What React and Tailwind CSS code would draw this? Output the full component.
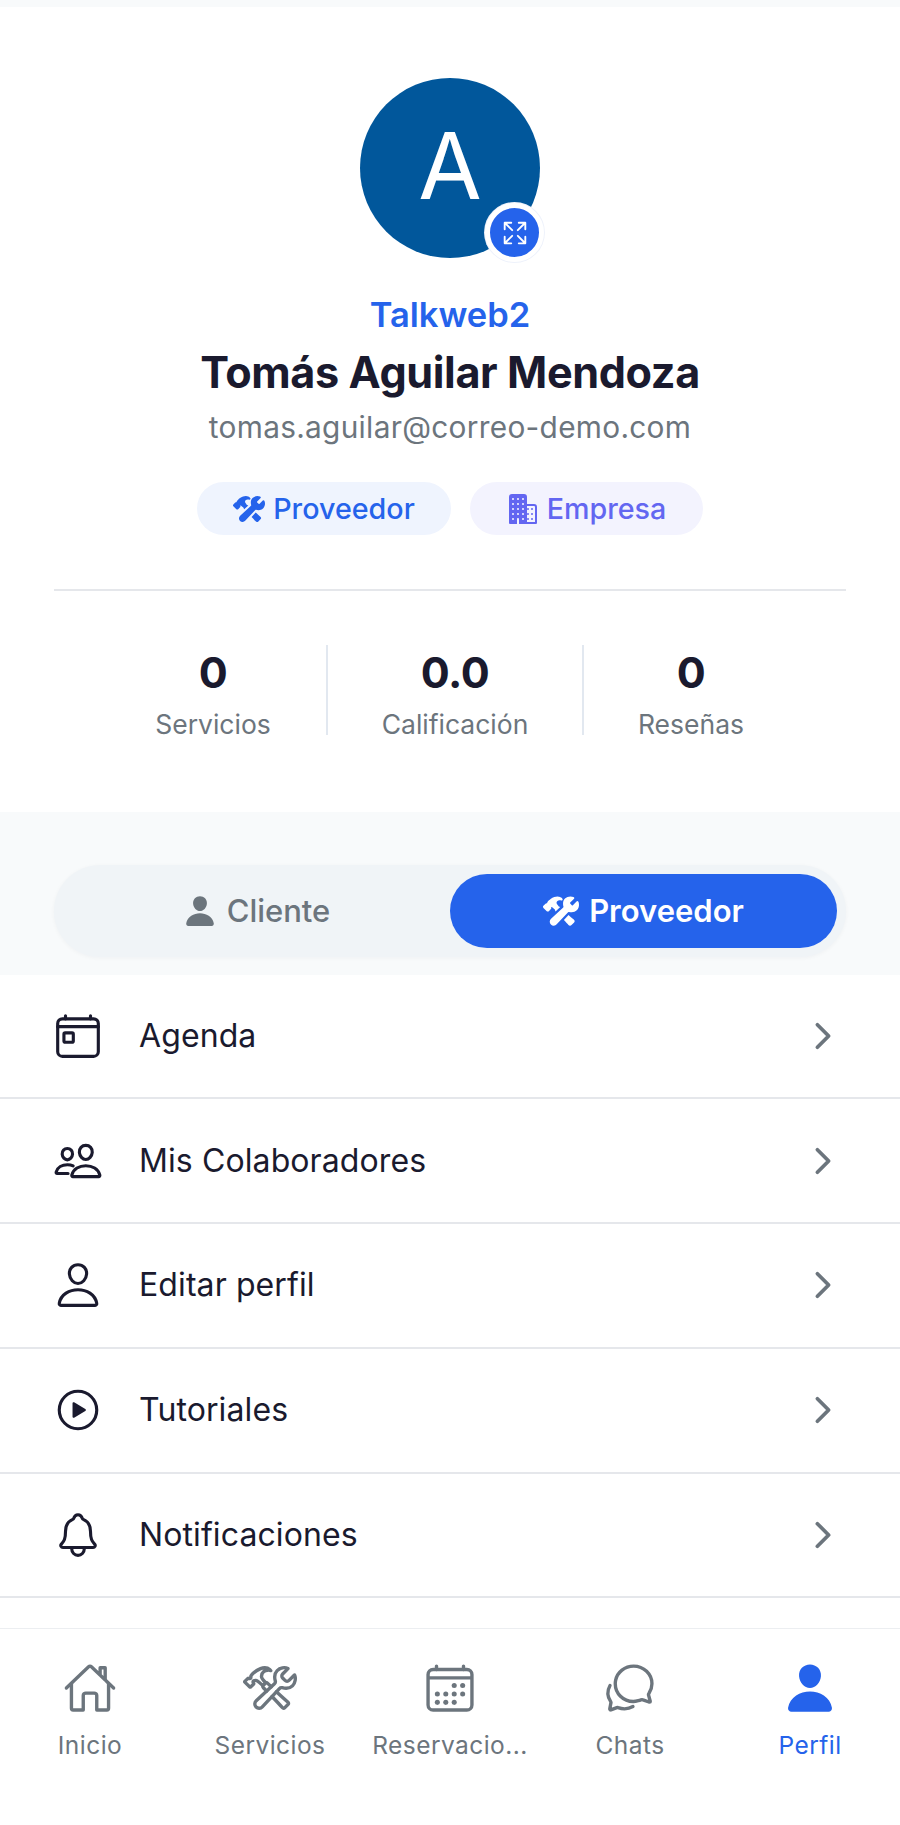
import React from "react";
import {
  IoBusiness,
  IoCalendarOutline,
  IoChatbubblesOutline,
  IoChevronForward,
  IoConstruct,
  IoConstructOutline,
  IoExpandOutline,
  IoHomeOutline,
  IoNotificationsOutline,
  IoPeopleOutline,
  IoPerson,
  IoPersonOutline,
  IoPlayCircleOutline,
  IoTodayOutline,
} from "react-icons/io5";

const menu = [
  { label: "Agenda", Icon: IoTodayOutline },
  { label: "Mis Colaboradores", Icon: IoPeopleOutline },
  { label: "Editar perfil", Icon: IoPersonOutline },
  { label: "Tutoriales", Icon: IoPlayCircleOutline },
  { label: "Notificaciones", Icon: IoNotificationsOutline },
];

const stats = [
  { value: "0", label: "Servicios", cls: "w-[228px]" },
  { value: "0.0", label: "Calificación", cls: "w-[256px]" },
  { value: "0", label: "Reseñas", cls: "w-[214px]" },
];

const nav = [
  { label: "Inicio", Icon: IoHomeOutline },
  { label: "Servicios", Icon: IoConstructOutline },
  { label: "Reservaciones", Icon: IoCalendarOutline },
  { label: "Chats", Icon: IoChatbubblesOutline },
  { label: "Perfil", Icon: IoPerson, active: true },
];

export default function App() {
  return (
    <div className="w-[900px] h-[1825px] bg-white flex flex-col overflow-hidden font-['Inter',sans-serif] text-[#1a1a2e]">
      <div className="flex-1 min-h-0 overflow-hidden flex flex-col">
        <div className="h-[7px] bg-[#f8fafb] shrink-0" />
        <section className="h-[805px] shrink-0 flex flex-col items-center pt-[71px]">
          <div className="relative w-[180px] h-[180px] rounded-full bg-[#01579b] flex items-center justify-center shrink-0">
            <span className="font-normal text-white text-[92px] leading-none pb-[4px]">A</span>
            <div className="absolute left-[125px] top-[125px] w-[59px] h-[59px] rounded-full bg-[#2563eb] border-[5px] border-white shadow-[0_0_0_1px_#eef2fb] flex items-center justify-center">
              <IoExpandOutline className="text-white" size={30} />
            </div>
          </div>
          <div className="mt-[35px] text-[#2563eb] text-[34.5px] leading-[44px] font-semibold">Talkweb2</div>
          <div className="mt-[9px] text-[43.2px] leading-[52px] font-bold tracking-[-0.4px]">Tomás Aguilar Mendoza</div>
          <div className="mt-[10px] text-[#6c757d] text-[29.8px] leading-[38px] tracking-[0.3px]">tomas.aguilar@correo-demo.com</div>
          <div className="mt-[36px] flex gap-[19px]">
            <div className="w-[254px] h-[53px] rounded-full bg-[#eff4fe] text-[#2563eb] flex items-center justify-center gap-[8px] text-[28.7px] font-medium">
              <IoConstruct size={32} />
              <span>Proveedor</span>
            </div>
            <div className="w-[233px] h-[53px] rounded-full bg-[#f3f3fe] text-[#6366f1] flex items-center justify-center gap-[8px] text-[28.7px] font-medium">
              <IoBusiness size={32} />
              <span>Empresa</span>
            </div>
          </div>
          <div className="mt-[54px] w-[792px] h-[2px] bg-[#e5e7eb] shrink-0" />
          <div className="mt-[54px] w-full flex pl-[100px]">
            {stats.map((s, i) => (
              <div
                key={s.label}
                className={`${s.cls} h-[90px] flex flex-col items-center ${i < 2 ? "border-r-2 border-[#e2e8f0]" : ""}`}
              >
                <div className="text-[43px] leading-[54px] font-bold tracking-[-0.5px]">{s.value}</div>
                <div className="mt-[8px] text-[#6c757d] text-[26.5px] leading-[34px]">{s.label}</div>
              </div>
            ))}
          </div>
        </section>
        <section className="h-[162.5px] shrink-0 bg-[#f8fafb] px-[54px] pt-[53px]">
          <div className="h-[92px] rounded-full bg-[#f0f4f7] shadow-[0_1px_4px_rgba(15,23,42,0.04)] p-[9px] flex">
            <div className="flex-1 flex items-center justify-center gap-[10px] text-[#6c757d] text-[31px] font-medium">
              <IoPerson size={34} />
              <span>Cliente</span>
            </div>
            <div className="flex-1 rounded-full bg-[#2563eb] flex items-center justify-center gap-[10px] text-white text-[31px] font-semibold">
              <IoConstruct size={36} />
              <span>Proveedor</span>
            </div>
          </div>
        </section>
        <ul className="shrink-0">
          {menu.map(({ label, Icon }) => (
            <li
              key={label}
              className="h-[124.8px] border-b-2 border-[#e5e7eb] flex items-center pl-[53px] pr-[57px]"
            >
              <Icon size={50} className="shrink-0 text-[#1a1a2e]" />
              <span className="ml-[36px] flex-1 text-[32px] tracking-[0.1px]">{label}</span>
              <IoChevronForward size={40} className="text-[#6c757d]" />
            </li>
          ))}
        </ul>
      </div>
      <nav className="h-[197px] shrink-0 border-t border-[#eceef1] grid grid-cols-5 pt-[32px]">
        {nav.map(({ label, Icon, active }) => (
          <div
            key={label}
            className={`flex flex-col items-center min-w-0 px-[10px] ${active ? "text-[#2563eb]" : "text-[#6c757d]"}`}
          >
            <Icon size={54} />
            <div className="mt-[14px] w-full truncate text-center text-[24.5px] leading-[32px] tracking-[0.45px]">
              {label === "Reservaciones" ? "Reservacio..." : label}
            </div>
          </div>
        ))}
      </nav>
    </div>
  );
}
